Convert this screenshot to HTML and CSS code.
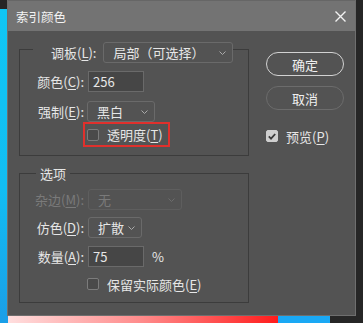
FILE: index.html
```html
<!DOCTYPE html>
<html lang="zh-CN">
<head>
  <meta charset="UTF-8" />
  <title>索引颜色</title>
  <link rel="stylesheet" href="styles.css">
</head>
<body>

<div class="desk">
  <div class="edge-left"></div>

  <div class="dialog">
    <div class="titlebar">
      <span class="title">索引颜色</span>
      <svg class="close" width="11" height="11" viewBox="0 0 11 11">
        <path d="M0.5 0.5 L10.5 10.5 M10.5 0.5 L0.5 10.5" stroke="#f2f2f2" stroke-width="1.4" fill="none"/>
      </svg>
    </div>

    <div class="content">
      <div class="main">
        <div class="group palette">
          <div class="group-head">
            <span class="head-label">调板(<u>L</u>):</span>
            <div class="select wide">局部（可选择）<svg class="chev" width="7" height="4" viewBox="0 0 7 4"><path d="M0.5 0.5 L3.5 3.5 L6.5 0.5" stroke="#aaa" fill="none"/></svg></div>
          </div>
          <div class="row r-colors">
            <span class="lbl">颜色(<u>C</u>):</span>
            <div class="field">256</div>
          </div>
          <div class="row r-forced">
            <span class="lbl">强制(<u>E</u>):</span>
            <div class="select short">黑白<svg class="chev" width="7" height="4" viewBox="0 0 7 4"><path d="M0.5 0.5 L3.5 3.5 L6.5 0.5" stroke="#aaa" fill="none"/></svg></div>
          </div>
          <div class="row r-trans">
            <div class="highlight">
              <span class="check"></span>
              <span>透明度(<u>T</u>)</span>
            </div>
          </div>
        </div>

        <div class="group options">
          <div class="group-head">
            <span class="legend">选项</span>
          </div>
          <div class="row r-matte disabled">
            <span class="lbl">杂边(<u>M</u>):</span>
            <div class="select matte">无<svg class="chev" width="7" height="4" viewBox="0 0 7 4"><path d="M0.5 0.5 L3.5 3.5 L6.5 0.5" stroke="#6c6c6c" fill="none"/></svg></div>
          </div>
          <div class="row r-dither">
            <span class="lbl">仿色(<u>D</u>):</span>
            <div class="select dither">扩散<svg class="chev" width="7" height="4" viewBox="0 0 7 4"><path d="M0.5 0.5 L3.5 3.5 L6.5 0.5" stroke="#aaa" fill="none"/></svg></div>
          </div>
          <div class="row r-amount">
            <span class="lbl">数量(<u>A</u>):</span>
            <div class="field">75</div>
            <span class="unit">%</span>
          </div>
          <div class="row r-keep">
            <span class="check"></span>
            <span>保留实际颜色(<u>E</u>)</span>
          </div>
        </div>
      </div>

      <div class="side">
        <button class="btn primary">确定</button>
        <button class="btn">取消</button>
        <div class="preview">
          <span class="check on">
            <svg width="8" height="7" viewBox="0 0 8 7"><path d="M0.8 3.4 L3 5.6 L7.2 1" stroke="#3a3a3a" stroke-width="1.8" fill="none"/></svg>
          </span>
          <span>预览(<u>P</u>)</span>
        </div>
      </div>
    </div>
  </div>

  <div class="edge-right"></div>

  <div class="strip">
    <div class="s-blue-l"></div>
    <div class="s-grad"></div>
    <div class="s-blue"></div>
    <div class="s-dark"></div>
  </div>
</div>

</body>
</html>
```

FILE: styles.css
```css
:root {
  --panel: #535353;
  --title: #737373;
  --text: #e6e6e6;
  --line: #3c3c3c;
  --ctrl-border: #6a6a6a;
}
* { box-sizing: border-box; }

body {
  margin: 0;
  background: #262626;
  font-family: "Noto Sans CJK SC", "Liberation Sans", sans-serif;
  font-size: 13px;
  color: var(--text);
}

.desk {
  width: 363px;
  height: 323px;
  display: grid;
  grid-template-columns: 7px 349px 7px;
  grid-template-rows: 316px 7px;
}

.edge-left {
  background: linear-gradient(#262626 0, #262626 9px, #10c6f4 9px, #12bdf2 60%, #1a9fe8 100%);
}

.edge-right { background: #262626; }

.strip {
  grid-column: 1 / 4;
  display: flex;
}
.s-blue-l { width: 8px; background: #1a9fe8; }
.s-grad { width: 270px; background: linear-gradient(90deg, #ffdede, #ff8a8a 50%, #ff1c1c); }
.s-blue { width: 52px; background: #1aa8f4; }
.s-dark { flex: 1; background: #262626; }

/* dialog */
.dialog {
  background: var(--panel);
  border: 1px solid #6e6e6e;
  border-top: none;
  display: flex;
  flex-direction: column;
}

.titlebar {
  height: 31px;
  background: var(--title);
  border-top: 1px solid #666;
  display: flex;
  align-items: center;
  justify-content: space-between;
  padding: 0 9px 0 8px;
}

.title {
  font-size: 12.5px;
  color: #f4f4f4;
}

.content {
  flex: 1;
  display: flex;
  padding-left: 11px;
}

.main {
  width: 230px;
  padding-top: 18px;
}

.group {
  border: 1px solid var(--line);
}

.options { margin-top: 17px; padding-bottom: 10px; }
.palette { padding-bottom: 8px; }

.group-head {
  display: flex;
  align-items: center;
}

.palette .group-head {
  margin-top: -8px;
  margin-left: 13px;
  height: 21px;
}

.head-label {
  background: var(--panel);
  line-height: 21px;
  padding: 0 7px 0 18px;
}

.options .group-head {
  margin-top: -9px;
  margin-left: 16px;
  height: 17px;
}

.legend {
  background: var(--panel);
  padding: 0 4px;
  line-height: 17px;
}

u { text-decoration-thickness: 1px; text-underline-offset: 2px; }

.row {
  display: flex;
  align-items: center;
}

.lbl {
  width: 64px;
  text-align: right;
  margin-right: 4px;
  white-space: nowrap;
}

.field {
  width: 56px;
  height: 21px;
  background: #464646;
  border: 1px solid var(--ctrl-border);
  line-height: 19px;
  padding-left: 4px;
}

.select {
  height: 21px;
  background: var(--panel);
  border: 1px solid var(--ctrl-border);
  border-radius: 3px;
  display: flex;
  align-items: center;
  justify-content: space-between;
  padding: 0 6px 0 9px;
}

.chev { flex: none; }

.wide { width: 130px; }
.short { width: 68px; margin-left: -1px; }
.matte { width: 94px; }
.dither { width: 54px; }

.r-colors { margin-top: 8px; }
.r-forced { margin-top: 9px; }
.r-trans { padding-left: 63px; }

.highlight {
  width: 87px;
  height: 25px;
  border: 2px solid #e0302c;
  display: flex;
  align-items: center;
  padding-left: 2px;
}

.check {
  width: 12px;
  height: 12px;
  border: 1.5px solid #7c7c7c;
  border-radius: 2px;
  background: #4a4a4a;
  margin-right: 8px;
  flex: none;
}

.check.on {
  background: #cfcfcf;
  border-color: #cfcfcf;
  display: flex;
  align-items: center;
  justify-content: center;
}

.r-matte { margin-top: 7px; }
.r-dither { margin-top: 7px; }
.r-amount { margin-top: 8px; }
.r-keep { margin-top: 9px; height: 16px; padding-left: 67px; }

.disabled { color: #7a7a7a; }
.disabled .select { border-color: #5e5e5e; }

.unit { margin-left: 8px; }

/* right column */
.side {
  margin-left: 17px;
  width: 78px;
  padding-top: 21px;
  display: flex;
  flex-direction: column;
}

.btn {
  height: 24px;
  border-radius: 12px;
  border: 1.5px solid #6c6c6c;
  background: var(--panel);
  color: #f0f0f0;
  font-family: inherit;
  font-size: 13px;
  padding: 0;
  margin-bottom: 10px;
}

.btn.primary { border-color: #d2d2d2; }

.preview {
  margin-top: 9px;
  height: 14px;
  display: flex;
  align-items: center;
}
```
